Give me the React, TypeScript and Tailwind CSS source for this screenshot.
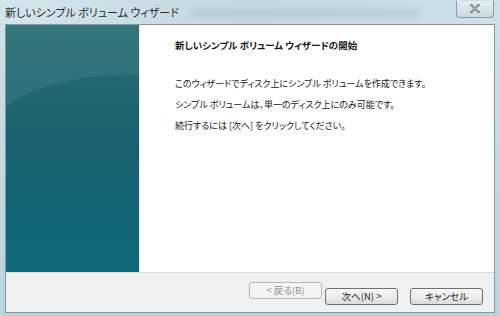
import React from "react";

const jp = "font-['Meiryo_UI','Noto_Sans_CJK_JP',sans-serif] [font-feature-settings:'palt']";

function Btn({ label, disabled }: { label: string; disabled?: boolean }) {
  return (
    <button
      type="button"
      className={`h-[17px] w-[73px] rounded-[3px] border text-[9.5px] leading-none ${jp} ${
        disabled
          ? "border-[#b4b8bb] bg-[#f4f4f4] text-[#8d8d8d]"
          : "border-[#707070] bg-gradient-to-b from-[#f6f6f6] via-[#ececec] to-[#dcdcdc] text-[#1e1e1e]"
      }`}
    >
      {label}
    </button>
  );
}

export default function App() {
  return (
    <div className="flex h-[316px] w-[500px] flex-col overflow-hidden bg-gradient-to-b from-[#cfe2e9] via-[#c2d9e2] to-[#bcd4dd]">
      {/* title bar */}
      <div className="relative flex h-[24px] shrink-0 items-center bg-gradient-to-r from-[#d3e5ec] via-[#c3d7df] to-[#cde1e8] pl-[5px] pr-[6px]">
        <span className={`text-[11px] text-[#2b2b2b] ${jp}`}>新しいシンプル ボリューム ウィザード</span>
        <div className="pointer-events-none absolute left-[190px] top-[10px] h-[6px] w-[230px] rounded-full bg-[#9fb7c0] opacity-50 blur-[3px]" />
        <div className="ml-auto flex h-[17px] w-[38px] -translate-y-[3px] items-center justify-center rounded-b-[4px] border border-t-0 border-[#8a9ba5] bg-gradient-to-b from-[#e3eef2] to-[#c8dae1]">
          <svg width="10" height="9" viewBox="0 0 10 9">
            <path d="M1.5 1 L8.5 8 M8.5 1 L1.5 8" stroke="#5b6c76" strokeWidth="2.2" strokeLinecap="square" />
            <path d="M1.5 1 L8.5 8 M8.5 1 L1.5 8" stroke="#eef4f6" strokeWidth="0.8" />
          </svg>
        </div>
      </div>

      {/* client area */}
      <div className="mx-[5px] flex h-[289px] flex-col border border-[#8797a0] bg-white">
        <div className="flex flex-1">
          <div className="relative w-[133px] overflow-hidden bg-gradient-to-b from-[#2a6d73] via-[#186270] to-[#106a7b]">
            <svg className="absolute left-0 top-0" width="133" height="249" viewBox="0 0 133 249">
              <path d="M0 0 H133 V50 C85 48 25 60 0 82 Z" fill="#5a9496" opacity="0.22" />
            </svg>
          </div>
          <div className={`flex-1 border-l border-[#e8e8e8] pl-[35px] pt-[13px] text-[#1a1a1a] ${jp}`}>
            <div className="text-[9.5px] font-bold">新しいシンプル ボリューム ウィザードの開始</div>
            <div className="mt-[25px] flex flex-col gap-[8px] text-[9px] leading-[13px]">
              <div>このウィザードでディスク上にシンプル ボリュームを作成できます。</div>
              <div>シンプル ボリュームは、単一のディスク上にのみ可能です。</div>
              <div>続行するには [次へ] をクリックしてください。</div>
            </div>
          </div>
        </div>
        <div className="flex h-[40px] shrink-0 items-start justify-end border-t border-[#dcdcdc] bg-[#f0f0f0] pr-[11px] pt-[9px]">
          <Btn label="< 戻る(B)" disabled />
          <div className="ml-[3px]">
            <Btn label="次へ(N) >" />
          </div>
          <div className="ml-[12px]">
            <Btn label="キャンセル" />
          </div>
        </div>
      </div>
    </div>
  );
}
